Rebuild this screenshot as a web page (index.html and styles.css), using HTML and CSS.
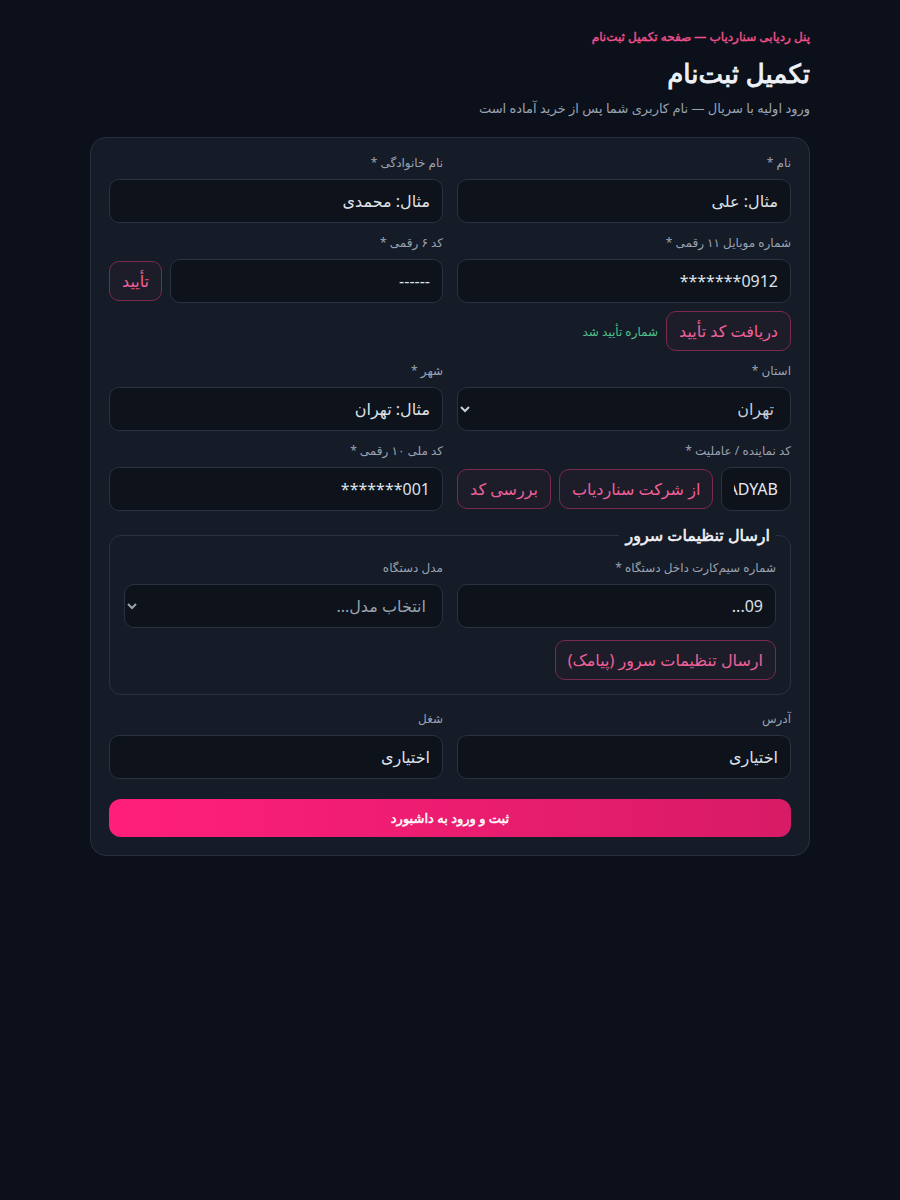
FILE: index.html
```html
<!DOCTYPE html>
<html lang="fa" dir="rtl">
<head>
<meta charset="utf-8">
<title>تکمیل ثبت‌نام</title>
<link rel="stylesheet" href="styles.css">
</head>
<body>
<main class="page">
  <div class="crumb">پنل ردیابی سناردیاب — صفحه تکمیل ثبت‌نام</div>
  <h1 class="title">تکمیل ثبت‌نام</h1>
  <p class="subtitle">ورود اولیه با سریال — نام کاربری شما پس از خرید آماده است</p>

  <form class="card">
    <div class="grid">
      <div class="field">
        <label class="label">نام *</label>
        <input class="input" type="text" placeholder="مثال: علی">
      </div>
      <div class="field">
        <label class="label">نام خانوادگی *</label>
        <input class="input" type="text" placeholder="مثال: محمدی">
      </div>

      <div class="field">
        <label class="label">شماره موبایل ۱۱ رقمی *</label>
        <input class="input" type="text" placeholder="0912*******">
        <div class="actions">
          <button type="button" class="btn-outline">دریافت کد تأیید</button>
          <span class="ok">شماره تأیید شد</span>
        </div>
      </div>
      <div class="field">
        <label class="label">کد ۶ رقمی *</label>
        <div class="inline">
          <input class="input grow" type="text" placeholder="------">
          <button type="button" class="btn-outline">تأیید</button>
        </div>
      </div>

      <div class="field">
        <label class="label">استان *</label>
        <select class="input select">
          <option>تهران</option>
        </select>
      </div>
      <div class="field">
        <label class="label">شهر *</label>
        <input class="input" type="text" placeholder="مثال: تهران">
      </div>

      <div class="field">
        <label class="label">کد نماینده / عاملیت *</label>
        <div class="inline">
          <input class="input grow latin" type="text" value="SENARADYAB">
          <button type="button" class="btn-outline">از شرکت سناردیاب</button>
          <button type="button" class="btn-outline">بررسی کد</button>
        </div>
      </div>
      <div class="field">
        <label class="label">کد ملی ۱۰ رقمی *</label>
        <input class="input" type="text" placeholder="001*******">
      </div>
    </div>

    <fieldset class="box">
      <legend class="legend">ارسال تنظیمات سرور</legend>
      <div class="grid">
        <div class="field">
          <label class="label">شماره سیم‌کارت داخل دستگاه *</label>
          <input class="input" type="text" placeholder="09...">
        </div>
        <div class="field">
          <label class="label">مدل دستگاه</label>
          <select class="input select muted">
            <option>انتخاب مدل...</option>
          </select>
        </div>
        <div class="field">
          <button type="button" class="btn-outline self-start">ارسال تنظیمات سرور (پیامک)</button>
        </div>
      </div>
    </fieldset>

    <div class="grid">
      <div class="field">
        <label class="label">آدرس</label>
        <input class="input" type="text" placeholder="اختیاری">
      </div>
      <div class="field">
        <label class="label">شغل</label>
        <input class="input" type="text" placeholder="اختیاری">
      </div>
    </div>

    <button type="button" class="submit">ثبت و ورود به داشبورد</button>
  </form>
</main>
</body>
</html>
```

FILE: styles.css
```css
html {
  color-scheme: dark;
}

body {
  margin: 0;
  background: #0b101b;
  color: #e6e9ef;
  font-family: "Noto Sans", "DejaVu Sans", sans-serif;
}

.page {
  max-width: 720px;
  margin: 0 auto;
  padding-top: 28px;
}

.crumb {
  font-size: 12px;
  line-height: 18px;
  font-weight: 400;
  -webkit-text-stroke: 0.4px currentColor;
  color: #f0508c;
}

.title {
  margin: 10px 0 0;
  font-size: 26px;
  line-height: 34px;
  font-weight: 400;
  -webkit-text-stroke: 0.9px currentColor;
  color: #eef1f6;
}

.subtitle {
  margin: 8px 0 0;
  font-size: 13px;
  line-height: 20px;
  color: #9aa3b2;
}

.card {
  margin-top: 19px;
  background: #151b27;
  border: 1px solid #283040;
  border-radius: 16px;
  padding: 17px 18px 18px;
  display: flex;
  flex-direction: column;
  gap: 12px;
}

.grid {
  display: grid;
  grid-template-columns: 1fr 1fr;
  column-gap: 14px;
  row-gap: 12px;
}

.field {
  display: flex;
  flex-direction: column;
  min-width: 0;
}

.label {
  display: block;
  font-size: 12px;
  line-height: 16px;
  color: #9aa3b2;
  margin-bottom: 8px;
}

.input {
  box-sizing: border-box;
  width: 100%;
  height: 44px;
  padding: 0 12px;
  background: #0d121b;
  border: 1px solid #2a3241;
  border-radius: 10px;
  color: #e6e9ef;
  font-family: "Noto Sans", "DejaVu Sans", sans-serif;
  font-size: 16px;
  outline: none;
}

.input::placeholder {
  color: #dde1e8;
  opacity: 1;
}

.select {
  color: #c9cfd9;
}

.select.muted {
  color: #9aa1ad;
}

.latin {
  padding: 0 12px;
}

.inline {
  display: flex;
  align-items: center;
  gap: 8px;
}

.grow {
  flex: 1 1 auto;
  min-width: 0;
  width: auto;
}

.actions {
  display: flex;
  align-items: center;
  gap: 8px;
  margin-top: 8px;
}

.btn-outline {
  height: 40px;
  padding: 0 12px;
  background: rgba(240, 80, 140, 0.03);
  border: 1px solid #7c2a4d;
  border-radius: 10px;
  color: #f0609a;
  font-family: "Noto Sans", "DejaVu Sans", sans-serif;
  font-size: 16px;
  white-space: nowrap;
  flex: 0 0 auto;
}

.self-start {
  align-self: flex-start;
}

.ok {
  font-size: 12px;
  color: #4cc38a;
}

.box {
  margin: 2px 0 4px;
  padding: 0 14px 14px;
  border: 1px solid #2a3241;
  border-radius: 12px;
  min-width: 0;
}

.box .grid {
  margin-top: 15px;
}

.legend {
  padding: 0 6px;
  font-size: 16px;
  line-height: 20px;
  font-weight: 400;
  -webkit-text-stroke: 0.55px currentColor;
  color: #f1f3f7;
}

.submit {
  margin-top: 8px;
  height: 38px;
  border: none;
  border-radius: 12px;
  background: linear-gradient(270deg, #d81b66 0%, #ff1f7a 100%);
  color: #ffffff;
  font-family: "Noto Sans", "DejaVu Sans", sans-serif;
  font-size: 13px;
  font-weight: 400;
  -webkit-text-stroke: 0.45px currentColor;
}
```
